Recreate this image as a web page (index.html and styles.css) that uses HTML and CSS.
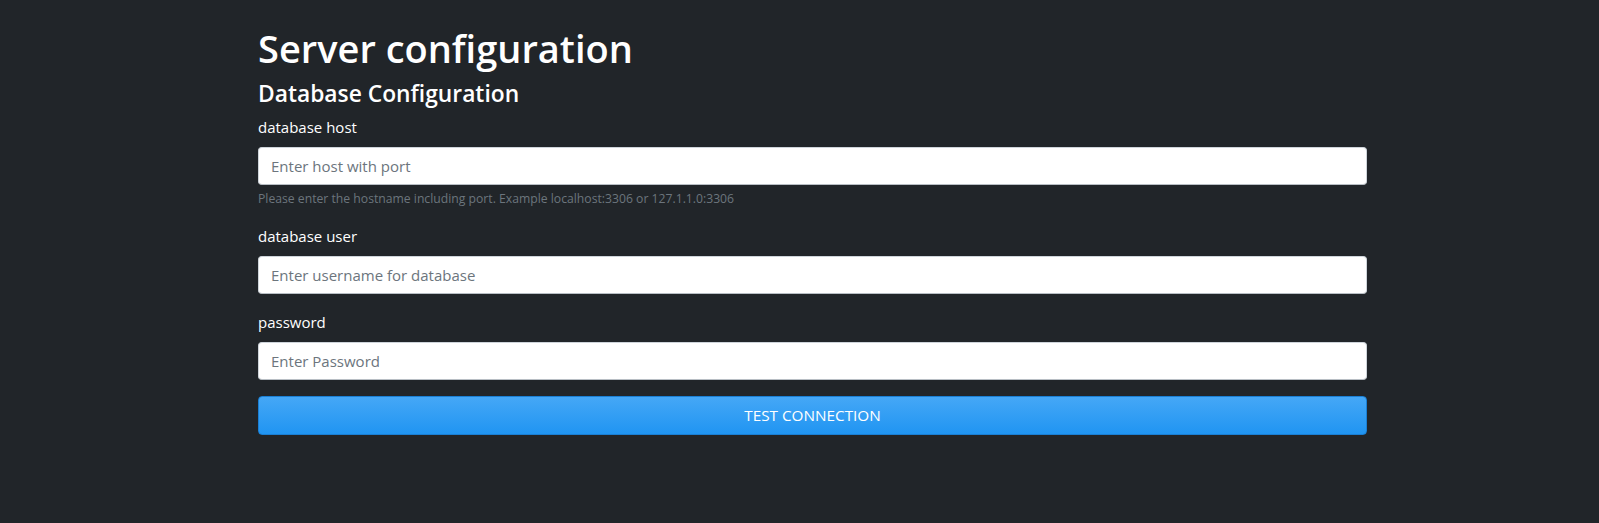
FILE: index.html
```html
<!DOCTYPE html>
<html lang="en">
<head>
<meta charset="utf-8">
<title>Server configuration</title>
<link rel="stylesheet" href="styles.css">
</head>
<body>
<main class="page">
  <h1 class="title">Server configuration</h1>
  <h4 class="subtitle">Database Configuration</h4>
  <form class="config-form">
    <div class="form-group">
      <label class="label" for="host">database host</label>
      <input class="input" id="host" type="text" placeholder="Enter host with port">
      <small class="help">Please enter the hostname including port. Example localhost:3306 or 127.1.1.0:3306</small>
    </div>
    <div class="form-group">
      <label class="label" for="user">database user</label>
      <input class="input" id="user" type="text" placeholder="Enter username for database">
    </div>
    <div class="form-group">
      <label class="label" for="pass">password</label>
      <input class="input" id="pass" type="password" placeholder="Enter Password">
    </div>
    <button class="btn" type="button">TEST CONNECTION</button>
  </form>
</main>
</body>
</html>
```

FILE: styles.css
```css
html, body {
  margin: 0;
  padding: 0;
}
body {
  background: #212529;
  color: #ffffff;
  font-family: "Open Sans", "Noto Sans", "Liberation Sans", sans-serif;
  font-size: 16px;
  line-height: 1.5;
}
.page {
  padding: 24px 232px 0 258px;
}
.title {
  margin: 0 0 7px 0;
  font-size: 38px;
  font-weight: 600;
  line-height: 48px;
}
.subtitle {
  margin: 0 0 7px 0;
  font-size: 22.8px;
  font-weight: 600;
  line-height: 29px;
}
.config-form {
  display: flex;
  flex-direction: column;
}
.form-group {
  display: flex;
  flex-direction: column;
  margin-bottom: 16px;
}
.label {
  font-size: 15px;
  line-height: 24px;
  margin-bottom: 8px;
}
.input {
  box-sizing: border-box;
  height: 38px;
  padding: 6px 12px;
  font: inherit;
  font-size: 15px;
  color: #495057;
  background: #ffffff;
  border: 1px solid #ced4da;
  border-bottom-color: #b8bec4;
  border-radius: 4px;
  outline: none;
}
.input::placeholder {
  color: #6c757d;
}
.help {
  margin-top: 4px;
  font-size: 12.2px;
  line-height: 19px;
  color: #6c757d;
}
.btn {
  box-sizing: border-box;
  height: 39px;
  font: inherit;
  font-size: 15.3px;
  color: #ffffff;
  background: linear-gradient(#45a7f6, #2095f2);
  border: 1px solid #1a7fd4;
  border-radius: 4px;
  cursor: pointer;
}
```
